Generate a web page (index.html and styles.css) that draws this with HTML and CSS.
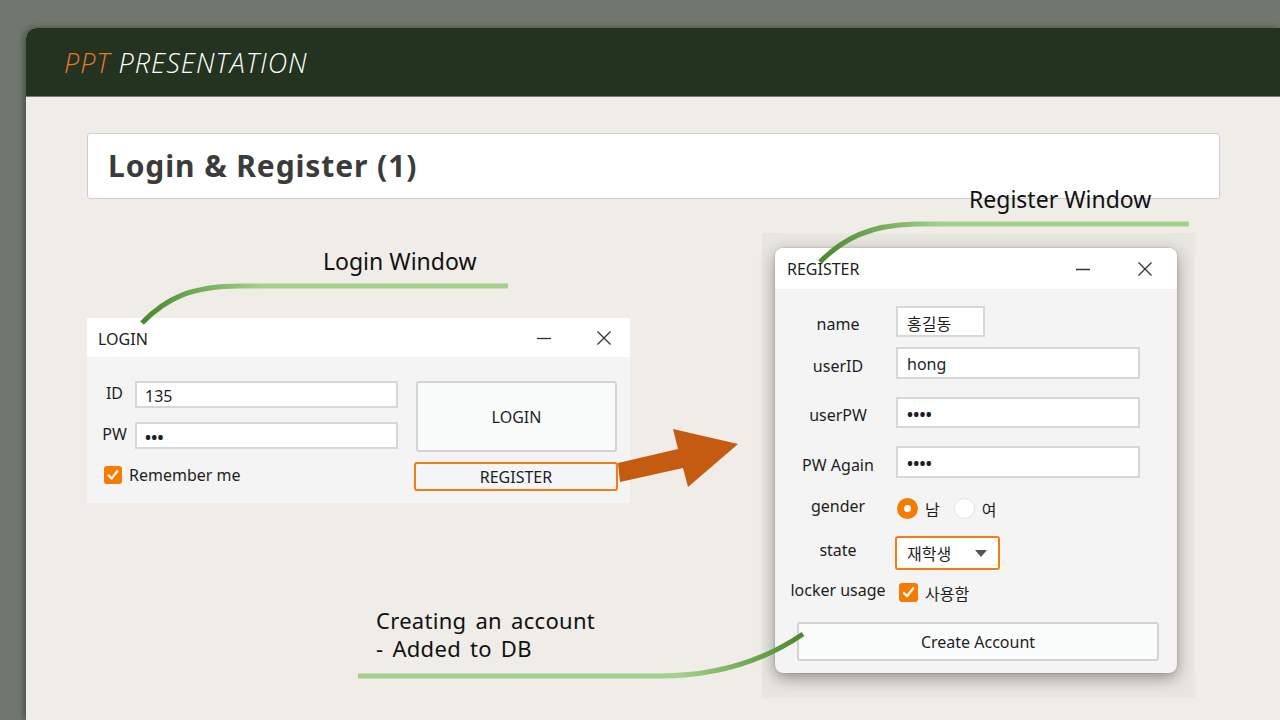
FILE: index.html
```html
<!DOCTYPE html>
<html lang="en">
<head>
<meta charset="utf-8">
<title>Login &amp; Register (1)</title>
<link rel="stylesheet" href="styles.css">
</head>
<body>
<div class="slide">
  <header class="slide-head"><span class="ppt">PPT</span>&nbsp;PRESENTATION</header>
  <div class="title-box"><h1>Login &amp; Register (1)</h1></div>

  <div class="note note-login">Login Window</div>
  <div class="note note-register">Register Window</div>
  <div class="note note-create"><div class="nline">Creating an account</div><div class="nline">- Added to DB</div></div>

  <!-- Login window -->
  <div class="win login-win">
    <div class="titlebar tb-login">
      <span class="tb-title">LOGIN</span>
      <div class="tb-btns tb-btns-login">
        <span class="tb-btn"><svg width="16" height="14" viewBox="0 0 16 14"><path d="M1 7.5H15" stroke="#333" stroke-width="1.3"/></svg></span>
        <span class="tb-btn"><svg width="16" height="16" viewBox="0 0 16 16"><path d="M1.5 1.5L14.5 14.5M14.5 1.5L1.5 14.5" stroke="#333" stroke-width="1.3"/></svg></span>
      </div>
    </div>
    <div class="login-body">
      <div class="login-left">
        <div class="lrow"><span class="llabel">ID</span><div class="field">135</div></div>
        <div class="lrow lrow2"><span class="llabel">PW</span><div class="field dots">•••</div></div>
        <div class="remember">
          <svg class="cb" width="18" height="18" viewBox="0 0 18 18"><rect width="18" height="18" rx="3" fill="#f57c00"/><path d="M4.5 9.3L7.6 12.6L13.4 5" stroke="#fff" stroke-width="2.2" fill="none" stroke-linecap="round" stroke-linejoin="round"/></svg>
          <span>Remember me</span>
        </div>
      </div>
      <div class="login-right">
        <div class="btn btn-login">LOGIN</div>
        <div class="btn btn-register">REGISTER</div>
      </div>
    </div>
  </div>

  <!-- Register window -->
  <div class="reg-backdrop">
    <div class="win reg-win">
      <div class="titlebar tb-reg">
        <span class="tb-title">REGISTER</span>
        <div class="tb-btns tb-btns-reg">
          <span class="tb-btn"><svg width="16" height="14" viewBox="0 0 16 14"><path d="M1 7.5H15" stroke="#333" stroke-width="1.3"/></svg></span>
          <span class="tb-btn"><svg width="16" height="16" viewBox="0 0 16 16"><path d="M1.5 1.5L14.5 14.5M14.5 1.5L1.5 14.5" stroke="#333" stroke-width="1.3"/></svg></span>
        </div>
      </div>
      <div class="reg-body">
        <div class="rrow r-name"><span class="rlabel low">name</span><div class="field kr name-field">홍길동</div></div>
        <div class="rrow r-id"><span class="rlabel low">userID</span><div class="field wide">hong</div></div>
        <div class="rrow r-pw"><span class="rlabel low">userPW</span><div class="field wide dots">••••</div></div>
        <div class="rrow r-pw2"><span class="rlabel low">PW Again</span><div class="field wide dots">••••</div></div>
        <div class="rrow r-gender"><span class="rlabel high">gender</span>
          <div class="radios">
            <span class="radio on"></span><span class="kr rtext">남</span>
            <span class="radio off"></span><span class="kr rtext">여</span>
          </div>
        </div>
        <div class="rrow r-state"><span class="rlabel high">state</span>
          <div class="combo"><span class="kr">재학생</span><span class="caret"></span></div>
        </div>
        <div class="rrow r-locker"><span class="rlabel high">locker usage</span>
          <div class="locker">
            <svg class="cb" width="19" height="19" viewBox="0 0 19 19"><rect width="19" height="19" rx="3" fill="#f57c00"/><path d="M4.8 9.8L8 13.2L14.2 5.3" stroke="#fff" stroke-width="2.2" fill="none" stroke-linecap="round" stroke-linejoin="round"/></svg>
            <span class="kr">사용함</span>
          </div>
        </div>
        <div class="btn btn-create">Create Account</div>
      </div>
    </div>
  </div>

  <!-- connector lines and arrow drawn over the windows -->
  <svg class="overlay" width="1280" height="720" viewBox="0 0 1280 720">
    <defs>
      <linearGradient id="g1" gradientUnits="userSpaceOnUse" x1="142" y1="0" x2="260" y2="0">
        <stop offset="0" stop-color="#4a882c"/><stop offset="1" stop-color="#a3d08a"/>
      </linearGradient>
      <linearGradient id="g2" gradientUnits="userSpaceOnUse" x1="820" y1="0" x2="940" y2="0">
        <stop offset="0" stop-color="#4a882c"/><stop offset="1" stop-color="#a3d08a"/>
      </linearGradient>
      <linearGradient id="g3" gradientUnits="userSpaceOnUse" x1="803" y1="0" x2="680" y2="0">
        <stop offset="0" stop-color="#4a882c"/><stop offset="1" stop-color="#a3d08a"/>
      </linearGradient>
    </defs>
    <path d="M142,323 C166,298 192,286 240,286 L508,286" stroke="url(#g1)" stroke-width="5" fill="none"/>
    <path d="M820,262 C844,238 870,225 915,224 L1189,224" stroke="url(#g2)" stroke-width="5" fill="none"/>
    <path d="M358,676 L660,676 C720,676 765,660 803,634" stroke="url(#g3)" stroke-width="5" fill="none"/>
    <polygon points="618,463 678,449 673,429 738,444 688,487 683,468 620,482" fill="#c55a11"/>
  </svg>
</div>
</body>
</html>
```

FILE: styles.css
```css
html, body {
  margin: 0;
  height: 100%;
  overflow: hidden;
}
body {
  background: #6f776e;
  font-family: "Noto Sans", "Noto Sans CJK KR", sans-serif;
  color: #222;
}
.slide {
  position: relative;
  margin: 28px 0 0 26px;
  width: 1254px;
  height: 692px;
  background: #f0ede8;
  border-top-left-radius: 10px;
  overflow: hidden;
  box-shadow: -2px 0 6px rgba(0, 0, 0, 0.35);
}
.slide-head {
  height: 68px;
  border-bottom: 1px solid #737b70;
  background: #243220;
  display: flex;
  align-items: center;
  padding-left: 38px;
  font-family: "Open Sans", sans-serif;
  font-style: italic;
  font-weight: 300;
  font-size: 27px;
  letter-spacing: 1px;
  color: #ffffff;
}
.ppt { color: #e8782e; }

.title-box {
  box-sizing: border-box;
  margin: 36px 0 0 61px;
  width: 1133px;
  height: 66px;
  background: #ffffff;
  border: 1px solid #cfcdd6;
  border-radius: 3px;
  display: flex;
  align-items: center;
  padding-left: 20px;
}
.title-box h1 {
  margin: 0;
  font-family: "Noto Sans", sans-serif;
  font-weight: 700;
  font-size: 30px;
  letter-spacing: 0.9px;
  color: #3b3b3b;
  padding-bottom: 2px;
}

/* slide notes */
.note {
  position: absolute;
  font-family: "Noto Sans", "Noto Sans CJK KR", sans-serif;
  font-size: 22px;
  line-height: 28px;
  letter-spacing: 0.3px;
  word-spacing: 3px;
  color: #111;
  white-space: nowrap;
}
.note-login { left: 297px; top: 219px; font-size: 23px; letter-spacing: 0; word-spacing: 0; }
.note-register { left: 943px; top: 157px; font-size: 23px; letter-spacing: 0; word-spacing: 0; }
.note-create { left: 350px; top: 578px; }
.nline { height: 28px; }

/* windows */
.win {
  font-family: "Noto Sans", "Noto Sans CJK KR", sans-serif;
  font-size: 16px;
  color: #1e1e1e;
  background: #f4f4f4;
}
.titlebar {
  display: flex;
  align-items: center;
  background: #ffffff;
}
.tb-title { line-height: 20px; }
.tb-btns { display: flex; margin-left: auto; }
.tb-btn {
  width: 46px;
  height: 30px;
  display: flex;
  align-items: center;
  justify-content: center;
}

.login-win {
  position: absolute;
  left: 61px;
  top: 290px;
  width: 543px;
  height: 185px;
}
.tb-login { height: 39px; padding-left: 11px; }
.tb-login .tb-title { padding-top: 3px; }
.tb-btns-login { gap: 14px; margin-right: 3px; }

.login-body {
  display: flex;
  padding: 24px 0 0 10px;
  gap: 16px;
}
.login-left { width: 301px; display: flex; flex-direction: column; }
.lrow { display: flex; align-items: center; height: 27px; }
.lrow2 { margin-top: 14px; }
.llabel {
  width: 32px;
  text-align: center;
  margin-right: 6px;
  padding-bottom: 4px;
  padding-left: 3px;
  box-sizing: border-box;
}
.field {
  box-sizing: border-box;
  background: #ffffff;
  border: 2px solid #d7d7d7;
  display: flex;
  align-items: center;
  padding: 2px 0 0 8px;
  height: 100%;
}
.login-left .field { width: 263px; }
.dots { font-weight: 700; letter-spacing: 0.2px; }
.remember {
  display: flex;
  align-items: center;
  gap: 7px;
  margin-top: 17px;
  padding-left: 7px;
  height: 18px;
}
.login-right { width: 204px; display: flex; flex-direction: column; }
.btn {
  box-sizing: border-box;
  display: flex;
  align-items: center;
  justify-content: center;
  border-radius: 3px;
}
.btn-login {
  margin: 0 1px 0 2px;
  height: 71px;
  background: #f9fbfb;
  border: 2px solid #d3d3d3;
}
.btn-register {
  margin-top: 10px;
  height: 29px;
  background: #f3f5f7;
  border: 2px solid #f57c10;
  padding-top: 1px;
}

/* register window */
.reg-backdrop {
  position: absolute;
  left: 736px;
  top: 205px;
  width: 433px;
  height: 465px;
  background: #e9e6e1;
  padding: 15px 0 0 13px;
  box-sizing: border-box;
}
.reg-win {
  width: 402px;
  height: 425px;
  border-radius: 8px;
  overflow: hidden;
  box-shadow: 0 5px 16px rgba(0, 0, 0, 0.38), 0 0 2px rgba(0, 0, 0, 0.25);
}
.tb-reg { height: 41px; padding-left: 12px; }
.tb-reg .tb-title { padding-top: 1px; }
.tb-btns-reg { gap: 16px; margin-right: 9px; }

.reg-body {
  display: flex;
  flex-direction: column;
  padding: 17px 0 0 14px;
}
.rrow { display: flex; align-items: center; }
.rlabel {
  width: 98px;
  text-align: center;
  margin-right: 9px;
  white-space: nowrap;
}
.rlabel.low { padding-top: 5px; }
.rlabel.high { padding-bottom: 6px; }
.r-name { height: 31px; }
.r-id { height: 32px; margin-top: 10px; }
.r-pw { height: 31px; margin-top: 18px; }
.r-pw2 { height: 32px; margin-top: 18px; }
.r-gender { height: 21px; margin-top: 20px; }
.r-state { height: 34px; margin-top: 17px; }
.r-locker { height: 19px; margin-top: 13px; }
.name-field { width: 89px; padding-left: 9px; }
.wide { width: 244px; padding-left: 9px; }
.kr { font-family: "Noto Sans CJK KR", sans-serif; }

.radios { display: flex; align-items: center; padding-left: 1px; }
.radio {
  box-sizing: border-box;
  width: 21px;
  height: 21px;
  border-radius: 50%;
}
.radio.on {
  background: #ffffff;
  border: 7px solid #f57c00;
}
.radio.off { background: #ffffff; border: 1px solid #e2e2e2; margin-left: 14px; }
.rtext { margin-left: 7px; }
.combo {
  box-sizing: border-box;
  width: 105px;
  height: 34px;
  margin-left: -1px;
  border: 2px solid #f57c10;
  border-radius: 3px;
  background: #ffffff;
  display: flex;
  align-items: center;
  padding-left: 10px;
}
.caret {
  margin-left: auto;
  margin-right: 11px;
  width: 0;
  height: 0;
  border-left: 6px solid transparent;
  border-right: 6px solid transparent;
  border-top: 7px solid #555;
}
.locker { display: flex; align-items: center; gap: 7px; padding-left: 3px; }
.btn-create {
  margin: 20px 0 0 8px;
  width: 362px;
  height: 39px;
  background: #fafcfc;
  border: 2px solid #d3d3d3;
}

.overlay {
  position: absolute;
  left: -26px;
  top: -28px;
  pointer-events: none;
}
```
